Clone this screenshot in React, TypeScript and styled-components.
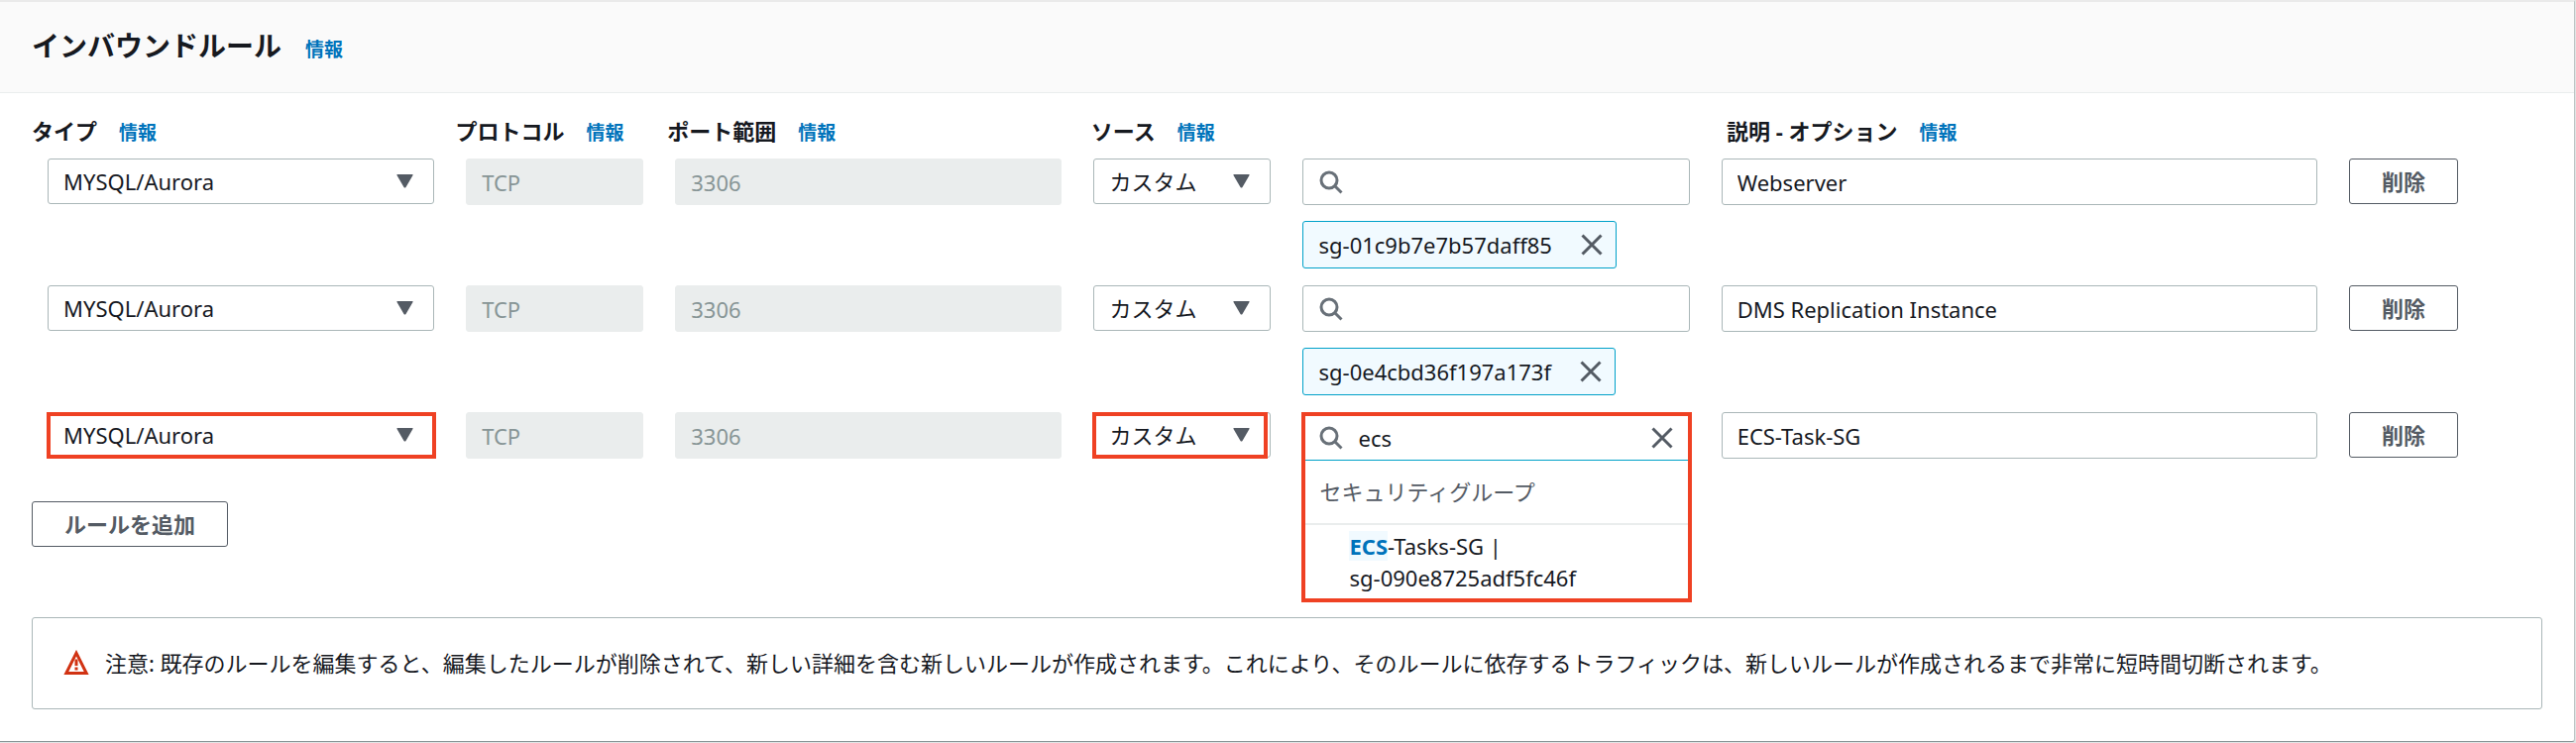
import React, { useState } from 'react';
import styled, { createGlobalStyle, css } from 'styled-components';

const GlobalStyle = createGlobalStyle`
  * { box-sizing: border-box; }
  body {
    margin: 0;
    background: #e1e5e5;
    color: #16191f;
    font-family: "Noto Sans", "Noto Sans CJK JP", sans-serif;
    font-size: 22px;
    line-height: 32px;
  }
  button, input, select { font: inherit; color: inherit; margin: 0; }
`;

const Panel = styled.section`
  margin-right: 1px;
  background: #fff;
  border-top: 2px solid #eaeaea;
  border-right: 1px solid #bcc4c4;
  border-bottom: 1px solid #879596;
  border-bottom-right-radius: 3px;
`;

const PanelHeader = styled.header`
  display: flex;
  align-items: baseline;
  gap: 24px;
  padding: 24px 32px 27px;
  background: #fafafa;
  border-bottom: 1px solid #eaeded;
`;

const Title = styled.h2`
  margin: 0;
  font-size: 28px;
  line-height: 40px;
  font-weight: 700;
`;

const InfoLink = styled.a`
  color: #0073bb;
  font-size: 19px;
  font-weight: 700;
  text-decoration: none;
`;

const ColumnHeads = styled.div`
  display: grid;
  grid-template-columns: 2fr 1fr 2fr 3fr 4fr;
  padding: 22px 0 10px 32px;
`;

const ColumnHead = styled.div`
  display: flex;
  align-items: baseline;
  gap: 22px;
  white-space: nowrap;
  font-weight: 700;
`;

const PanelBody = styled.div`
  padding: 0 32px 32px;
`;

const Rules = styled.div`
  display: flex;
  flex-direction: column;
  gap: 17px;
`;

const RuleRow = styled.div`
  display: grid;
  grid-template-columns: 2fr 1fr 2fr 1fr 2fr 3fr 1fr;
  align-items: start;
`;

const Cell = styled.div`
  min-width: 0;
  padding: 0 16px;
`;

const SourceCell = styled(Cell)`
  display: flex;
  flex-direction: column;
  align-items: flex-start;
  gap: 16px;
`;

const SelectBox = styled.div<{ $marked?: boolean; $inset?: boolean }>`
  position: relative;
  display: flex;
  ${({ $marked, $inset }) =>
    $marked &&
    css`
      &::after {
        content: '';
        position: absolute;
        inset: 0 ${$inset ? '3px' : '-2px'} -1px -1px;
        border: 4px solid #ef4123;
        pointer-events: none;
      }
    `}
`;

const Select = styled.select`
  appearance: none;
  width: 100%;
  height: 46px;
  padding: 0 48px 0 15px;
  background: #fff;
  border: 1px solid #aab7b8;
  border-radius: 3px;
`;

const Arrow = styled.svg`
  position: absolute;
  top: 16px;
  right: 21px;
  width: 17px;
  height: 14px;
  fill: #545b64;
  pointer-events: none;
`;

const TextInput = styled.input`
  display: block;
  width: 100%;
  height: 47px;
  padding: 0 15px;
  background: #fff;
  border: 1px solid #aab7b8;
  border-radius: 3px;
  outline: none;

  &:disabled {
    background: #eaeded;
    border-color: #eaeded;
    color: #879596;
  }
`;

const SearchBox = styled.div<{ $open?: boolean }>`
  display: flex;
  align-items: center;
  gap: 15px;
  width: 100%;
  height: 47px;
  padding: 0 16px;
  background: #fff;
  border: 1px solid #aab7b8;
  border-radius: 3px;
  ${({ $open }) =>
    $open &&
    css`
      height: 45px;
      padding: 0 15px 0 14px;
      border: 0;
      border-bottom: 1px solid #00a1c9;
      border-radius: 0;
    `}
`;

const SearchInput = styled.input`
  flex: 1;
  min-width: 0;
  height: 32px;
  padding: 0;
  border: 0;
  outline: none;
  background: transparent;
`;

const ComboAnchor = styled.div`
  position: relative;
  width: 100%;
  height: 47px;
`;

const ComboPopup = styled.div`
  position: absolute;
  z-index: 1;
  top: 0;
  left: -1px;
  right: -2px;
  border: 4px solid #ef4123;
  background: #fff;
`;

const GroupLabel = styled.div`
  padding: 15px 14px 16px;
  color: #545b64;
  border-bottom: 2px solid #eaeded;
`;

const Option = styled.div`
  padding: 5px 44px;
  mark {
    background: #f1faff;
    color: #0073bb;
    font-weight: 700;
  }
`;

const Token = styled.div`
  display: flex;
  align-items: center;
  gap: 29px;
  height: 48px;
  padding: 0 13px 0 15px;
  background: #f1faff;
  border: 1px solid #00a1c9;
  border-radius: 3px;
`;

const IconButton = styled.button`
  display: flex;
  padding: 0;
  border: 0;
  background: transparent;
  color: #545b64;
`;

const Button = styled.button`
  height: 46px;
  padding: 0 32px;
  background: #fff;
  border: 1px solid #545b64;
  border-radius: 3px;
  color: #545b64;
  font-weight: 700;
  white-space: nowrap;
`;

const Actions = styled.div`
  padding: 43px 0 71px;
  display: flex;
`;

const Alert = styled.div`
  display: flex;
  align-items: center;
  gap: 16px;
  padding: 29px 31px 30px;
  border: 1px solid #aab7b8;
  border-radius: 3px;
`;

const SearchIcon = () => (
  <svg width="24" height="24" viewBox="0 0 24 24" fill="none" stroke="#687078" strokeWidth="3" aria-hidden="true">
    <circle cx="10" cy="10" r="8" />
    <path d="M15.5 15.5 L22.5 22.5" />
  </svg>
);

const CloseIcon = () => (
  <svg width="22" height="22" viewBox="0 0 22 22" fill="none" stroke="currentColor" strokeWidth="3" aria-hidden="true">
    <path d="M1.5 1.5 L20.5 20.5 M20.5 1.5 L1.5 20.5" />
  </svg>
);

const WarningIcon = () => (
  <svg width="26" height="26" viewBox="0 0 26 26" fill="none" stroke="#d13212" strokeWidth="3" aria-hidden="true">
    <path d="M13 3.2 L23.2 23.5 H2.8 Z" />
    <path d="M13 9.5 V16 M13 17.500 V20.500" />
  </svg>
);

const Info = () => <InfoLink href="#info">情報</InfoLink>;

const heads = [
  { id: 'type', text: 'タイプ' },
  { id: 'protocol', text: 'プロトコル' },
  { id: 'port', text: 'ポート範囲' },
  { id: 'source', text: 'ソース' },
  { id: 'description', text: '説明 - オプション' },
];

interface Rule {
  description: string;
  group?: string;
  query: string;
}

const initialRules: Rule[] = [
  { description: 'Webserver', group: 'sg-01c9b7e7b57daff85', query: '' },
  { description: 'DMS Replication Instance', group: 'sg-0e4cbd36f197a173f', query: '' },
  { description: 'ECS-Task-SG', query: 'ecs' },
];

interface DropdownProps {
  labelId: string;
  value: string;
  marked?: boolean;
  inset?: boolean;
}

const Dropdown = ({ labelId, value, marked, inset }: DropdownProps) => (
  <SelectBox $marked={marked} $inset={inset}>
    <Select aria-labelledby={labelId} defaultValue={value}>
      <option>{value}</option>
    </Select>
    <Arrow viewBox="0 0 17 14" aria-hidden="true">
      <path d="M1 0 H16 Q17 0 16.5 1 L9.5 13 Q8.5 14 7.5 13 L0.5 1 Q0 0 1 0 Z" />
    </Arrow>
  </SelectBox>
);

const RuleLine = ({ rule }: { rule: Rule }) => {
  const [query, setQuery] = useState(rule.query);
  const open = !rule.group;
  const search = (
    <SearchBox $open={open}>
      <SearchIcon />
      <SearchInput aria-labelledby="source" value={query} onChange={(e) => setQuery(e.target.value)} />
      {open && (
        <IconButton type="button" aria-label="クリア" onClick={() => setQuery('')}>
          <CloseIcon />
        </IconButton>
      )}
    </SearchBox>
  );

  return (
    <RuleRow>
      <Cell>
        <Dropdown labelId="type" value="MYSQL/Aurora" marked={open} />
      </Cell>
      <Cell>
        <TextInput aria-labelledby="protocol" value="TCP" disabled />
      </Cell>
      <Cell>
        <TextInput aria-labelledby="port" value="3306" disabled />
      </Cell>
      <Cell>
        <Dropdown labelId="source" value="カスタム" marked={open} inset />
      </Cell>
      <SourceCell>
        {open ? (
          <ComboAnchor>
            <ComboPopup>
              {search}
              <div role="listbox" aria-label="セキュリティグループ">
                <GroupLabel>セキュリティグループ</GroupLabel>
                <Option role="option" aria-selected="false">
                  <mark>ECS</mark>-Tasks-SG |<br />
                  sg-090e8725adf5fc46f
                </Option>
              </div>
            </ComboPopup>
          </ComboAnchor>
        ) : (
          <>
            {search}
            <Token>
              <span>{rule.group}</span>
              <IconButton type="button" aria-label={`${rule.group} を削除`}>
                <CloseIcon />
              </IconButton>
            </Token>
          </>
        )}
      </SourceCell>
      <Cell>
        <TextInput aria-labelledby="description" defaultValue={rule.description} />
      </Cell>
      <Cell>
        <Button type="button">削除</Button>
      </Cell>
    </RuleRow>
  );
};

export default function App() {
  return (
    <>
      <GlobalStyle />
      <Panel>
        <PanelHeader>
          <Title>インバウンドルール</Title>
          <Info />
        </PanelHeader>
        <ColumnHeads>
          {heads.map((head) => (
            <ColumnHead key={head.id}>
              <span id={head.id}>{head.text}</span>
              <Info />
            </ColumnHead>
          ))}
        </ColumnHeads>
        <PanelBody>
          <Rules>
            {initialRules.map((rule) => (
              <RuleLine key={rule.description} rule={rule} />
            ))}
          </Rules>
          <Actions>
            <Button type="button">ルールを追加</Button>
          </Actions>
          <Alert role="note">
            <WarningIcon />
            <span>
              注意: 既存のルールを編集すると、編集したルールが削除されて、新しい詳細を含む新しいルールが作成されます。これにより、そのルールに依存するトラフィックは、新しいルールが作成されるまで非常に短時間切断されます。
            </span>
          </Alert>
        </PanelBody>
      </Panel>
    </>
  );
}
